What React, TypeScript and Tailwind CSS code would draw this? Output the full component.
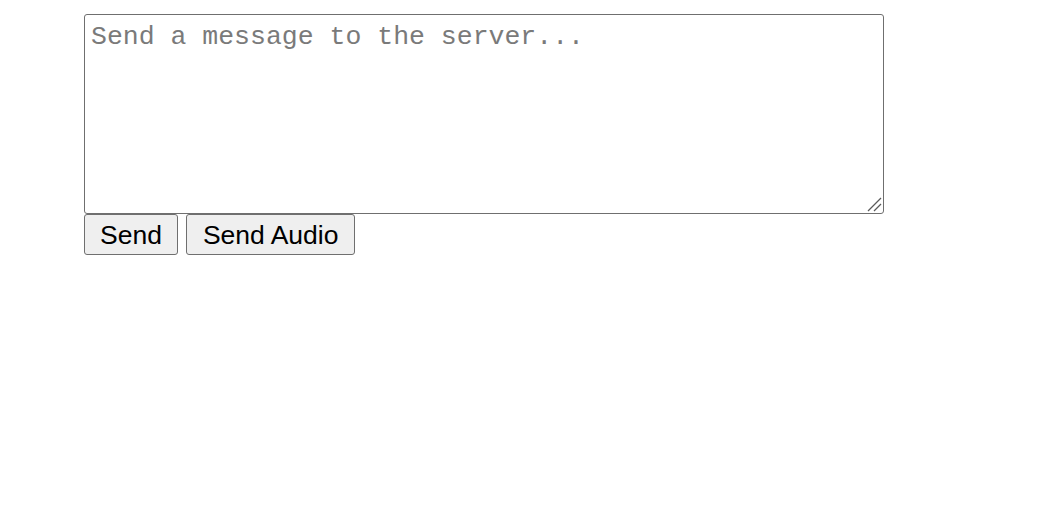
import React from "react";

export default function App() {
  return (
    <div className="w-[1064px] h-[508px] bg-white pl-[84px] pt-[14px]">
      <div className="relative w-[800px] h-[200px]">
        <textarea
          placeholder="Send a message to the server..."
          className="block w-[800px] h-[200px] border border-[#6f6f6f] rounded-[3px] pl-[6px] pr-[6px] pt-[7px] pb-[3px] text-[26.5px] leading-[30px] text-black placeholder:text-[#7a7a7a] outline-none resize-none"
          style={{ fontFamily: '"Liberation Mono", monospace' }}
        />
        <svg
          className="absolute right-[2px] bottom-[2px] pointer-events-none"
          width="16"
          height="16"
          viewBox="0 0 16 16"
        >
          <line x1="2" y1="15" x2="15" y2="2" stroke="#5a5a5a" strokeWidth="1.3" />
          <line x1="8" y1="15" x2="15" y2="8" stroke="#5a5a5a" strokeWidth="1.3" />
        </svg>
      </div>
      <div className="flex gap-[8px] mt-[0px]" style={{ fontFamily: '"Liberation Sans", Arial, sans-serif' }}>
        <button className="h-[41px] px-[15px] border border-[#6f6f6f] rounded-[3px] bg-[#efefef] text-[26.5px] leading-[30px] text-black">
          Send
        </button>
        <button className="h-[41px] px-[16px] border border-[#6f6f6f] rounded-[3px] bg-[#efefef] text-[26.5px] leading-[30px] text-black">
          Send Audio
        </button>
      </div>
    </div>
  );
}
